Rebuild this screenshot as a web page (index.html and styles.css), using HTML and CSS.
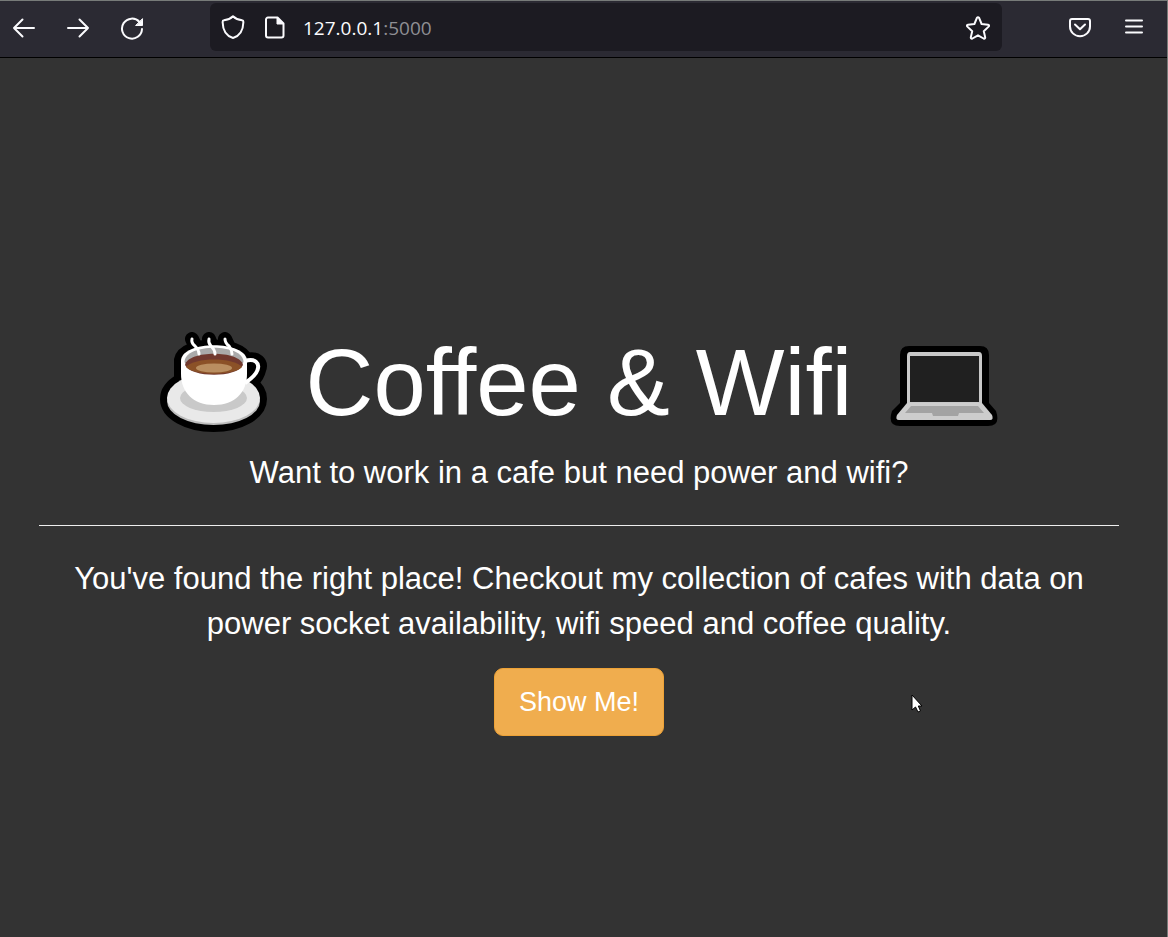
FILE: index.html
```html
<!DOCTYPE html>
<html lang="en">
<head>
<meta charset="utf-8">
<meta name="viewport" content="width=device-width, initial-scale=1">
<title>Coffee &amp; Wifi</title>
<link rel="stylesheet" href="styles.css">
</head>
<body>
<div class="window">
  <header class="toolbar">
    <nav class="nav-buttons" aria-label="Browser navigation">
      <button class="tool" type="button" aria-label="Back">
        <svg class="icon" viewBox="0 0 24 24"><path d="M22 12H2M10.500 3.500L2 12l8.500 8.500"/></svg>
      </button>
      <button class="tool" type="button" aria-label="Forward">
        <svg class="icon" viewBox="0 0 24 24"><path d="M2 12H22M13.500 3.500L22 12l-8.500 8.500"/></svg>
      </button>
      <button class="tool" type="button" aria-label="Reload">
        <svg class="icon" viewBox="0 0 24 24"><path d="M19.500 6A10 10 0 1 0 22 13"/><path class="solid" d="M22.500 3V9.500h-6.500z"/></svg>
      </button>
    </nav>
    <div class="address">
      <svg class="icon" viewBox="0 0 24 24"><path d="M12 1.200C9.800 3.400 5.500 5 2.900 5.300C1.700 5.400 1.600 6 1.600 7C1.800 15 5.300 21 12 23C18.700 21 22.200 15 22.400 7C22.400 6 22.300 5.400 21.100 5.300C18.500 5 14.200 3.400 12 1.200z"/></svg>
      <svg class="icon page-icon" viewBox="0 0 24 24"><path d="M5 2.500h9.500l6 6v12a2 2 0 0 1-2 2H5a2 2 0 0 1-2-2V4.500a2 2 0 0 1 2-2z"/><path class="solid" d="M14 2.500V9H20.500z"/></svg>
      <span class="url">127.0.0.1<span class="port">:5000</span></span>
      <button class="tool" type="button" aria-label="Bookmark this page">
        <svg class="icon" viewBox="0 0 24 24"><path d="M10.900 1.900Q12 .4 13.100 1.900L15.600 8L22 8.700Q23.800 9.200 22.600 10.600L17.800 15.200L19.200 21.400Q19.300 23.100 17.600 22.500L12 19.300L6.400 22.500Q4.700 23.100 4.800 21.400L6.200 15.200L1.400 10.600Q.2 9.200 2 8.700L8.400 8z"/></svg>
      </button>
    </div>
    <div class="actions">
      <button class="tool" type="button" aria-label="Save to Pocket">
        <svg class="icon" viewBox="0 0 24 24"><path d="M4 3h16a2 2 0 0 1 2 2V10.500a10 9.700 0 0 1-20 0V5a2 2 0 0 1 2-2z"/><path d="M7 8.500l5 4.800 5-4.800"/></svg>
      </button>
      <button class="tool" type="button" aria-label="Open menu">
        <svg class="icon" viewBox="0 0 24 24"><path d="M4 4.500h16M4 10.500h16M4 16.500h16"/></svg>
      </button>
    </div>
  </header>

  <main class="page">
    <h1 class="title">
      <svg class="emoji" viewBox="0 0 108 102" role="img" aria-label="Coffee cup">
        <g class="outline">
          <ellipse cx="53.500" cy="67" rx="46.500" ry="26"/>
          <path d="M21 28C25 10 80 10 86 28C97 25 102 31 99 38C97 46 92 50 83 54V62H30L21 45z"/>
          <path d="M32 7L39 22M49 7L55 22M65 7L72 22"/>
        </g>
        <ellipse cx="53.500" cy="69" rx="46.500" ry="24" fill="#bdbdbd"/>
        <ellipse cx="53.500" cy="66" rx="46.500" ry="25" fill="#e9e9e9"/>
        <ellipse cx="53.500" cy="66" rx="33.500" ry="14" fill="#c9c9c9"/>
        <path d="M85 29C95 26 100 31 97.500 38C96 43 91 47 85 51" fill="none" stroke="#fff" stroke-width="4"/>
        <path d="M21 29C21 8 87 8 87 29V42C87 60 75 73 54 73C33 73 21 60 21 42z" fill="#fff"/>
        <path d="M24.500 30C24.500 11 83.500 11 83.500 30L80 36H28z" fill="#aaa"/>
        <path d="M25 33C28 18 80 18 83 33C77 46 31 46 25 33z" fill="#71392f"/>
        <path d="M26 35C34 25 74 25 82 35C75 44 33 44 26 35z" fill="#8b5127"/>
        <ellipse cx="54" cy="36" rx="18" ry="4.500" fill="#b98e60"/>
        <path class="steam" d="M32 7Q31 11 35 14Q39 18 39 22M49 7Q48 11 51 14Q55 18 55 22M65 7Q65 11 69 14Q72 18 72 22"/>
      </svg>
      <span>Coffee &amp; Wifi</span>
      <svg class="emoji" viewBox="0 0 108 102" role="img" aria-label="Laptop">
        <path d="M19 14H90Q99 14 99 23V71L106 79Q111 94 98 94H10Q-3 94 2 79L10 71V23Q10 14 19 14z" fill="#000"/>
        <path d="M20 20H89Q92 20 92 24V71H17V24Q17 20 20 20z" fill="#c8c8c8"/>
        <path d="M20 24H89V70H20z" fill="#202020"/>
        <path d="M17 71H92L102 83Q104 88 100 88H9Q5 88 7 83z" fill="#cdcdcd"/>
        <path d="M21 74H88L94 81H69L68 84H43L42 81H15z" fill="#a3a3a3"/>
      </svg>
    </h1>
    <p class="lead">Want to work in a cafe but need power and wifi?</p>
    <hr class="rule">
    <p class="lead">You've found the right place! Checkout my collection of cafes with data on power socket availability, wifi speed and coffee quality.</p>
    <button class="cta" type="button">Show Me!</button>
    <svg class="cursor" viewBox="0 0 12 19" aria-hidden="true"><path d="M1 1V16L4.500 13L7 18L9.500 17L7.300 12H11z"/></svg>
  </main>
</div>
</body>
</html>
```
FILE: styles.css
```css
* {
  box-sizing: border-box;
}

body {
  margin: 0;
  background: #333;
  color: #fff;
  font-family: "Liberation Sans", Arial, sans-serif;
}

.window {
  display: flex;
  flex-direction: column;
  min-height: 100vh;
  border-top: 1px solid #777b79;
  border-right: 1px solid #777b79;
}

.toolbar {
  display: flex;
  align-items: flex-start;
  justify-content: space-between;
  gap: 54px;
  height: 57px;
  padding: 2px 9px 0 0;
  background: #2b2a33;
  border-bottom: 1px solid #000;
}

.nav-buttons,
.actions {
  display: flex;
  gap: 6px;
}

.tool {
  display: flex;
  align-items: center;
  justify-content: center;
  width: 48px;
  height: 48px;
  padding: 2px 0 0;
  border: 0;
  background: none;
  color: inherit;
}

.icon {
  flex: none;
  width: 24px;
  height: 24px;
  fill: none;
  stroke: #fbfbfe;
  stroke-width: 2;
  stroke-linecap: round;
  stroke-linejoin: round;
}

.icon .solid {
  fill: #fbfbfe;
  stroke-width: 1;
}

.address {
  flex: 1;
  display: flex;
  align-items: center;
  height: 48px;
  padding-left: 11px;
  border-radius: 6px;
  background: #1c1b22;
}

.page-icon {
  margin: 0 16px 0 18px;
}

.url {
  flex: 1;
  padding-top: 2px;
  font: 19px "Open Sans", sans-serif;
  color: #fbfbfe;
}

.port {
  color: #8f8f94;
}

.page {
  position: relative;
  flex: 1;
  display: flex;
  flex-direction: column;
  align-items: center;
  justify-content: center;
  padding: 71px 48px 0 39px;
  text-align: center;
}

.title {
  display: flex;
  align-items: center;
  justify-content: center;
  gap: 38px;
  margin: 0 0 15px;
  font-size: 94px;
  font-weight: 400;
  line-height: 104px;
}

.emoji {
  width: 108px;
  height: 102px;
}

.outline {
  fill: #000;
  stroke: #000;
  stroke-width: 14;
  stroke-linejoin: round;
  stroke-linecap: round;
}

.steam {
  fill: none;
  stroke: #fff;
  stroke-width: 3;
  stroke-linecap: round;
}

.lead {
  margin: 0 0 22px;
  font-size: 31px;
  line-height: 45px;
}

.rule {
  width: 100%;
  margin: 8px 0 30px;
  border: 0;
  border-top: 1px solid #eee;
}

.cta {
  padding: 15px 24px;
  border: 1px solid #eea236;
  border-radius: 9px;
  background: #f0ad4e;
  color: #fff;
  font: 27px/36px "Liberation Sans", Arial, sans-serif;
}

.cursor {
  position: absolute;
  left: 911px;
  top: 636px;
  width: 12px;
  height: 19px;
  fill: #fff;
  stroke: #000;
  stroke-width: 1;
}
```
